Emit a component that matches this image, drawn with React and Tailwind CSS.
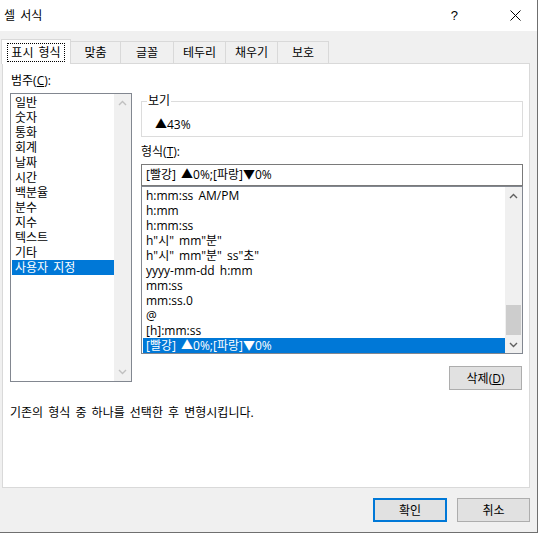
import React from "react";

const categories = ["일반", "숫자", "통화", "회계", "날짜", "시간", "백분율", "분수", "지수", "텍스트", "기타", "사용자 지정"];

const formats = [
  "h:mm:ss AM/PM",
  "h:mm",
  "h:mm:ss",
  'h"시" mm"분"',
  'h"시" mm"분" ss"초"',
  "yyyy-mm-dd h:mm",
  "mm:ss",
  "mm:ss.0",
  "@",
  "[h]:mm:ss",
  "[빨강] ▲0%;[파랑]▼0%",
];

function Chevron({ up, color }) {
  return (
    <svg width="9" height="6" viewBox="0 0 9 6">
      <path
        d={up ? "M1 5 L4.5 1.5 L8 5" : "M1 1 L4.5 4.5 L8 1"}
        fill="none"
        stroke={color}
        strokeWidth="1.4"
      />
    </svg>
  );
}

function TabButton({ label, width, selected }) {
  if (selected) {
    return (
      <div
        className="relative z-10 -mb-px h-[25px] bg-white border-l border-t border-r border-[#d9d9d9] flex items-start justify-center pt-[3px]"
        style={{ width }}
      >
        <span className="border border-dotted border-black px-[3px] h-[19px] leading-[17px]">{label}</span>
      </div>
    );
  }
  return (
    <div
      className="h-[22px] bg-[#f0f0f0] border-t border-r border-[#d9d9d9] flex items-center justify-center leading-[15px]"
      style={{ width }}
    >
      {label}
    </div>
  );
}

export default function App() {
  return (
    <div className="w-[540px] h-[533px] bg-white overflow-hidden text-[12px] text-black [word-spacing:2px] font-['Open_Sans','Noto_Sans_CJK_KR',sans-serif]">
      <div className="w-[538px] h-[533px] flex flex-col border-r border-b border-[#6f6f6f]">
        {/* title bar */}
        <div className="h-[31px] bg-white flex items-center pl-[4px] shrink-0">
          <span className="leading-[15px]">셀 서식</span>
          <span className="ml-auto mr-[52px] text-[13px] leading-[15px] font-['Liberation_Sans',sans-serif]">?</span>
          <svg width="11" height="11" viewBox="0 0 11 11" className="mr-[16px]">
            <path d="M0.5 0.5 L10.5 10.5 M10.5 0.5 L0.5 10.5" stroke="#000" strokeWidth="1" />
          </svg>
        </div>

        {/* body */}
        <div className="flex-1 bg-[#f0f0f0] flex flex-col pt-[8px]">
          {/* tabs */}
          <div className="flex items-end h-[24px] pl-[1px]">
            <TabButton label="표시 형식" width={70} selected />
            <TabButton label="맞춤" width={50} />
            <TabButton label="글꼴" width={53} />
            <TabButton label="테두리" width={52} />
            <TabButton label="채우기" width={52} />
            <TabButton label="보호" width={51} />
          </div>

          {/* panel */}
          <div className="ml-[2px] w-[528px] h-[425px] bg-white border border-[#d9d9d9] flex flex-col">
            <div className="flex">
              {/* category column */}
              <div className="ml-[7px] w-[122px] flex flex-col">
                <div className="mt-[9px] h-[15px] leading-[15px] pl-[1px]">
                  범주(<span className="underline">C</span>):
                </div>
                <div className="mt-[5px] h-[289px] border border-[#828790] flex">
                  <div className="flex-1 pt-[1px] pl-[1px]">
                    {categories.map((c) => (
                      <div
                        key={c}
                        className={
                          "h-[15px] leading-[15px] pl-[3px] " +
                          (c === "사용자 지정" ? "bg-[#0078d7] text-white" : "")
                        }
                      >
                        {c}
                      </div>
                    ))}
                  </div>
                  <div className="w-[17px] bg-[#f0f0f0] flex flex-col justify-between items-center py-[6px]">
                    <Chevron up color="#c0c0c0" />
                    <Chevron color="#c0c0c0" />
                  </div>
                </div>
              </div>

              {/* right column */}
              <div className="ml-[9px] w-[382px] flex flex-col pt-[37px]">
                <div className="relative h-[36px] border border-[#dcdcdc]">
                  <span className="absolute left-[5px] top-[-9px] bg-white px-[1px] leading-[15px]">보기</span>
                  <div className="pl-[13px] pt-[15px] leading-[15px]">▲43%</div>
                </div>
                <div className="mt-[7px] h-[15px] leading-[15px]">
                  형식(<span className="underline">T</span>):
                </div>
                <div className="mt-[5px] h-[22px] border border-[#7a7a7a] pl-[4px] leading-[20px] whitespace-pre">
                  [빨강] ▲0%;[파랑]▼0%
                </div>
                <div className="h-[168px] border border-[#828790] flex">
                  <div className="flex-1 pt-[1px] pl-[1px]">
                    {formats.map((f, i) => (
                      <div
                        key={f}
                        className={
                          "h-[15px] leading-[15px] pl-[3px] whitespace-pre " +
                          (i === formats.length - 1 ? "bg-[#0078d7] text-white" : "")
                        }
                      >
                        {f}
                      </div>
                    ))}
                  </div>
                  <div className="w-[17px] bg-[#f0f0f0] flex flex-col items-center">
                    <div className="h-[17px] flex items-center justify-center">
                      <Chevron up color="#606060" />
                    </div>
                    <div className="flex-1 flex flex-col justify-end w-full">
                      <div className="h-[30px] mx-px mb-[1px] bg-[#cdcdcd]" />
                    </div>
                    <div className="h-[17px] flex items-center justify-center">
                      <Chevron color="#606060" />
                    </div>
                  </div>
                </div>
                <div className="mt-[12px] self-end mr-[1px] w-[73px] h-[24px] bg-[#e1e1e1] border border-[#adadad] flex items-center justify-center leading-[15px]">
                  삭제(<span className="underline">D</span>)
                </div>
              </div>
            </div>

            <div className="ml-[7px] mt-[15px] h-[15px] leading-[15px]">
              기존의 형식 중 하나를 선택한 후 변형시킵니다.
            </div>
          </div>

          {/* footer buttons */}
          <div className="flex justify-end gap-[10px] pr-[7px] mt-[10px]">
            <div className="w-[74px] h-[24px] bg-[#e1e1e1] border-2 border-[#0078d7] flex items-center justify-center leading-[15px]">
              확인
            </div>
            <div className="w-[73px] h-[24px] bg-[#e1e1e1] border border-[#adadad] flex items-center justify-center leading-[15px]">
              취소
            </div>
          </div>
        </div>
      </div>
    </div>
  );
}
